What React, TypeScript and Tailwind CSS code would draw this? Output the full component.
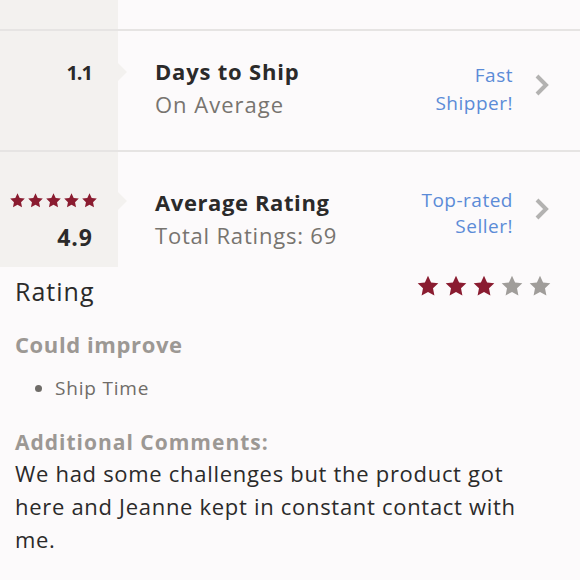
import React from "react";

const font = { fontFamily: "'Open Sans', Lato, sans-serif" };

const Star = ({ size, color }: { size: number; color: string }) => (
  <svg width={size} height={size} viewBox="0 0 24 24">
    <path
      fill={color}
      d="M12 1.8l3.1 6.6 7.2.9-5.3 5 1.4 7.1L12 17.9l-6.4 3.5 1.4-7.1-5.3-5 7.2-.9z"
    />
  </svg>
);

const Chevron = () => (
  <svg width="18" height="24" viewBox="0 0 18 24" className="shrink-0">
    <path d="M4 3l9 9-9 9" fill="none" stroke="#b3b2b1" strokeWidth="4" />
  </svg>
);

const Pointer = ({ top }: { top: number }) => (
  <div
    className="absolute left-[118px] w-0 h-0 border-y-[9px] border-y-transparent border-l-[9px] border-l-[#f3f1ef]"
    style={{ top }}
  />
);

export default function App() {
  return (
    <div className="w-[580px] h-[580px] bg-[#fcfafb] overflow-hidden" style={font}>
      <div className="flex h-[29px]">
        <div className="w-[118px] bg-[#f3f1ef]" />
      </div>
      <div className="h-[2px] bg-[#e6e4e3]" />

      {/* days to ship */}
      <div className="relative flex h-[119px]">
        <div className="w-[118px] shrink-0 bg-[#f3f1ef] flex flex-col items-end pt-[25px] pr-[26px]">
          <span className="text-[20px] leading-[33px] font-bold text-[#2b2a2a] tracking-[-1px]">1.1</span>
        </div>
        <Pointer top={32} />
        <div className="flex-1 pl-[37px] pt-[24px]">
          <div className="text-[22px] font-bold text-[#2b2a2a] leading-[33px] tracking-[0.8px]">Days to Ship</div>
          <div className="text-[22px] text-[#77746f] leading-[33px] tracking-[1px]">On Average</div>
        </div>
        <div className="text-right text-[19px] leading-[28px] text-[#5b8bd7] tracking-[0.5px] pt-[30px]">
          <div>Fast</div>
          <div>Shipper!</div>
        </div>
        <div className="pt-[42px] pl-[20px] pr-[29px]">
          <Chevron />
        </div>
      </div>
      <div className="h-[2px] bg-[#e6e4e3]" />

      {/* average rating */}
      <div className="relative flex h-[115px]">
        <div className="w-[118px] shrink-0 bg-[#f3f1ef] flex flex-col items-end pt-[40px] pr-[26px]">
          <div className="flex gap-[1px] -mr-[6px]">
            {[0, 1, 2, 3, 4].map((i) => (
              <Star key={i} size={17} color="#8a1c30" />
            ))}
          </div>
          <span className="text-[23px] leading-[33px] font-bold text-[#2b2a2a] tracking-[1px] -mr-[1px] mt-[12px]">4.9</span>
        </div>
        <Pointer top={40} />
        <div className="flex-1 pl-[37px] pt-[34px]">
          <div className="text-[22px] font-bold text-[#2b2a2a] leading-[33px] tracking-[0.6px]">Average Rating</div>
          <div className="text-[22px] text-[#77746f] leading-[33px] tracking-[0.8px]">Total Ratings: 69</div>
        </div>
        <div className="text-right text-[19px] leading-[26px] text-[#5b8bd7] tracking-[0.5px] pt-[35px]">
          <div>Top-rated</div>
          <div>Seller!</div>
        </div>
        <div className="pt-[45px] pl-[20px] pr-[29px]">
          <Chevron />
        </div>
      </div>

      <div className="px-[15px]">
        <div className="flex items-start justify-between mt-[6px]">
          <div className="text-[25px] text-[#2b2a2a] leading-[36px] tracking-[1px]">Rating</div>
          <div className="flex gap-[4px] mt-[1px] mr-[13px]">
            {[0, 1, 2].map((i) => (
              <Star key={i} size={24} color="#8a1c30" />
            ))}
            {[0, 1].map((i) => (
              <Star key={i} size={24} color="#a09d9a" />
            ))}
          </div>
        </div>
        <div className="text-[22px] font-bold text-[#9c9894] tracking-[0.6px] mt-[19px]">Could improve</div>
        <ul className="mt-[13px] pl-[20px]">
          <li className="flex items-center gap-[13px] text-[19px] text-[#6f6c68] tracking-[0.8px]">
            <span className="w-[7px] h-[7px] rounded-full bg-[#6f6c68]" />
            Ship Time
          </li>
        </ul>
        <div className="text-[21px] font-bold text-[#9c9894] tracking-[1px] mt-[24px]">Additional Comments:</div>
        <p className="max-w-[515px] text-[22px] text-[#2b2a2a] leading-[33px] tracking-[0.7px] -mt-[1px]">
          We had some challenges but the product got here and Jeanne kept in constant contact with
          me.
        </p>
      </div>
    </div>
  );
}
